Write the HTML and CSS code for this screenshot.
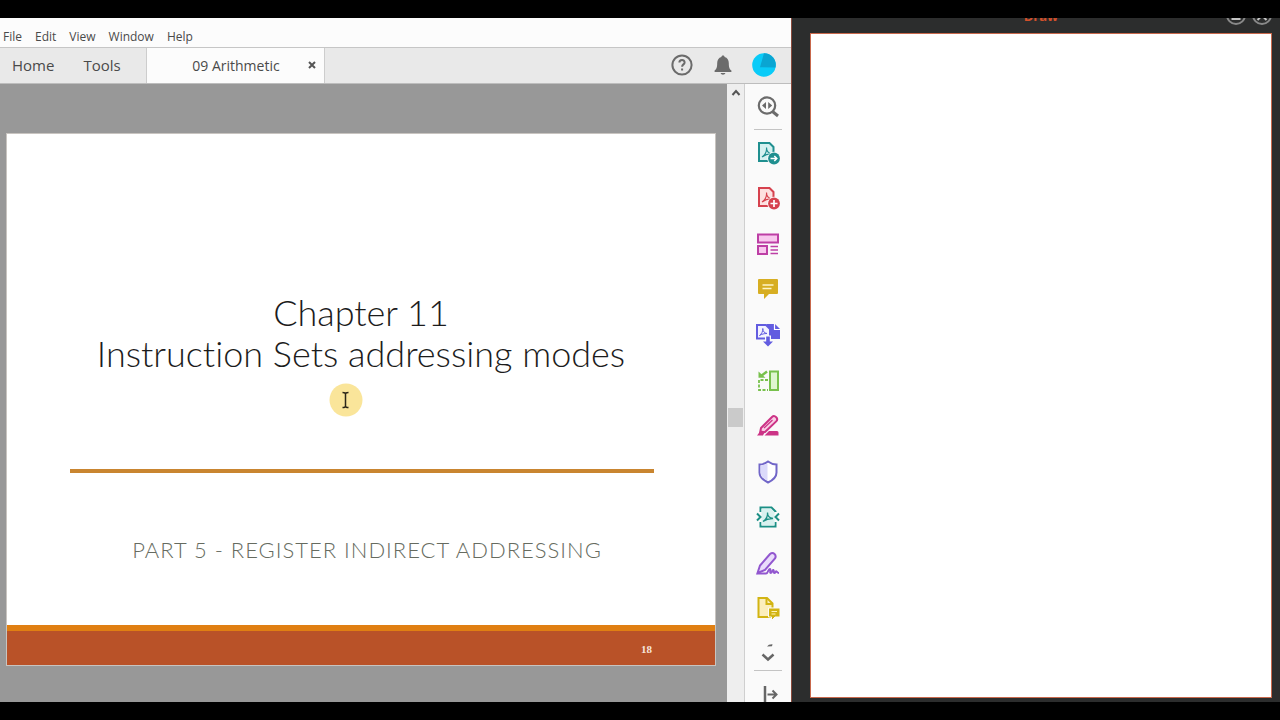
FILE: index.html
```html
<!DOCTYPE html>
<html lang="en">
<head>
    <meta charset="UTF-8">
    <meta name="viewport" content="width=device-width, initial-scale=1.0">
    <title>09 Arithmetic</title>
    <link rel="stylesheet" href="styles.css">
</head>
<body>
    <main class="reader">
        <nav class="menubar">
            <button type="button">File</button>
            <button type="button">Edit</button>
            <button type="button">View</button>
            <button type="button">Window</button>
            <button type="button">Help</button>
        </nav>

        <header class="tabbar">
            <button type="button" class="tab">Home</button>
            <button type="button" class="tab">Tools</button>
            <div class="tab-open">
                <button type="button" class="tab-name">09 Arithmetic</button>
                <button type="button" class="tab-close" aria-label="Close tab">
                    <svg width="8" height="8" viewBox="0 0 8 8" fill="none" stroke="#555" stroke-width="2"><path d="M1 1l6 6M7 1L1 7"/></svg>
                </button>
            </div>
            <div class="account">
                <button type="button" aria-label="Help">
                    <svg width="24" height="24" viewBox="0 0 24 24" fill="none" stroke="#6b6b6b" stroke-width="2"><circle cx="12" cy="12" r="9.6"/><path d="M9.4 9.6c0-3.4 5.3-3.3 5.2-.2 0 2-2.5 2-2.5 4.4M12.1 15.4v2"/></svg>
                </button>
                <button type="button" aria-label="Notifications">
                    <svg width="24" height="24" viewBox="0 0 24 24" fill="#6b6b6b"><path d="M12 2.6c1 0 1.6.6 1.6 1.5 2.8.8 4.2 3 4.2 6 0 4.6.8 6.2 2.6 7.5V19H3.600v-1.400c1.800-1.300 2.600-2.900 2.600-7.500 0-3 1.400-5.200 4.200-6 0-.9.6-1.500 1.600-1.500zM9.600 20h4.800c-.4 1.200-1.200 1.700-2.400 1.700S10 21.200 9.600 20z"/></svg>
                </button>
                <button type="button" aria-label="Profile">
                    <svg width="24" height="24" viewBox="0 0 24 24"><circle cx="12" cy="12" r="11.800" fill="#09cbf8"/><path d="M12 .2A11.800 11.800 0 0 1 23.500 14.500L8 14.200z" fill="#0aa5d2"/></svg>
                </button>
            </div>
        </header>

        <div class="workspace">
            <section class="document">
                <article class="slide">
                    <h1>Chapter 11<br>Instruction Sets addressing modes</h1>
                    <hr>
                    <p class="subtitle">PART 5 - REGISTER INDIRECT ADDRESSING</p>
                    <footer>18</footer>
                    <svg class="pointer" width="34" height="34" viewBox="0 0 34 34" fill="none"><circle cx="17" cy="17" r="16.500" fill="#fae59a"/><path d="M13.500 9.500c1.800 0 3 .3 3 1.600 0-1.300 1.200-1.600 3-1.600M16.500 11v12M13.500 24.500c1.800 0 3-.3 3-1.600 0 1.300 1.200 1.600 3 1.600" stroke="#2b2618" stroke-width="1.500"/></svg>
                </article>
            </section>

            <div class="scrollbar">
                <button type="button" aria-label="Scroll up">
                    <svg width="10" height="8" viewBox="0 0 10 8" fill="none" stroke="#555" stroke-width="2"><path d="M1.500 6L5 2l3.500 4"/></svg>
                </button>
                <div class="thumb"></div>
            </div>

            <aside class="tools">
                <button type="button" class="search" aria-label="Search tools">
                    <svg width="26" height="26" viewBox="0 0 26 26" fill="none" stroke="#6b6b6b" stroke-width="2.200"><circle cx="12" cy="11.500" r="8.200"/><path d="M17.500 17.500l5.500 4.500" stroke-width="3"/><path d="M11 8v7l-4-3.500zM13.200 8v7l4-3.500z" fill="#6b6b6b" stroke="none"/></svg>
                </button>
                <div class="tool-list">
                    <button type="button" aria-label="Export PDF">
                        <svg width="26" height="26" viewBox="0 0 26 26" fill="none" stroke="#1f8f8f" stroke-width="2"><path d="M4 3h10.500l4 4v14H4z" fill="#d5f1f0"/><path d="M7 17c3-2 5-5 4.500-9.500 0 3.500 2 6 5.500 6.500-4-.3-7 .8-10 3z" stroke-width="1.200"/><circle cx="19" cy="18.500" r="6.800" fill="#fafafa" stroke="none"/><circle cx="19" cy="18.500" r="5.900" fill="#1f8f8f" stroke="none"/><path d="M15.500 18.500h6M19.300 16l2.500 2.500-2.500 2.500" stroke="#fff" stroke-width="1.500"/></svg>
                    </button>
                    <button type="button" aria-label="Create PDF">
                        <svg width="26" height="26" viewBox="0 0 26 26" fill="none" stroke="#d6424e" stroke-width="2"><path d="M4 3h10.500l4 4v14H4z" fill="#fde0e0"/><path d="M7 17c3-2 5-5 4.500-9.500 0 3.500 2 6 5.500 6.500-4-.3-7 .8-10 3z" stroke-width="1.200"/><circle cx="19" cy="18.500" r="6.800" fill="#fafafa" stroke="none"/><circle cx="19" cy="18.500" r="5.900" fill="#d6424e" stroke="none"/><path d="M15.500 18.500h7M19 15v7" stroke="#fff" stroke-width="1.700"/></svg>
                    </button>
                    <button type="button" aria-label="Organize pages">
                        <svg width="26" height="26" viewBox="0 0 26 26" fill="#f8c8ee" stroke="#bd3fa5" stroke-width="2"><path d="M3 3.500h20v8H3zM3 15h9v8H3z"/><path d="M15.500 15.500h7.500M15.500 19h7.500M15.500 22.500h7.500" stroke-width="1.300"/></svg>
                    </button>
                    <button type="button" aria-label="Comment">
                        <svg width="26" height="26" viewBox="0 0 26 26" fill="none"><path d="M4 3h18q1 0 1 1v13q0 1-1 1h-8l-5 5v-5H4q-1 0-1-1V4q0-1 1-1z" fill="#d7ae22"/><path d="M7.500 9h11M7.500 12.500h9" stroke="#fff5c8" stroke-width="1.600"/></svg>
                    </button>
                    <button type="button" aria-label="Combine files">
                        <svg width="26" height="26" viewBox="0 0 26 26" fill="none" stroke="#625ce0"><path d="M12 2h8l5 5v10H12z" fill="#625ce0" stroke="none"/><path d="M19.500 2v5.500H25" stroke="#fff" stroke-width="1.200"/><path d="M2 3h9l4 4v9.500H2z" fill="#f3f2ff" stroke-width="2"/><path d="M4.500 13.500c2-1.500 3.500-4 3.300-7 0 2.800 1.500 4.500 4.200 5-3 0-5 .6-7.500 2z"/><path d="M10 13.500h6V19h3.500L13 25l-6.500-6H10z" fill="#fafafa" stroke="none"/><path d="M11.200 14.500h3.600v5H18l-5 5-5-5h3.200z" fill="#625ce0" stroke="none"/></svg>
                    </button>
                    <button type="button" aria-label="Crop pages">
                        <svg width="26" height="26" viewBox="0 0 26 26" fill="none" stroke="#78c14c" stroke-width="2"><path d="M15 3.500h8v18.500h-8z" fill="#dff6cf"/><path d="M13 12H4v10h9" stroke-width="1.800" stroke-dasharray="3 1.500"/><path d="M12 3.500L6 8" stroke-width="2.500"/><path d="M3.500 3.500v6.300h7z" fill="#78c14c" stroke="none"/></svg>
                    </button>
                    <button type="button" aria-label="Redact">
                        <svg width="26" height="26" viewBox="0 0 26 26" fill="none" stroke="#cc3386" stroke-width="2"><path d="M6 15L17 4q2-2 4.200.2 2 2 0 4.200L10 19l-5 1z" fill="#f9cde5"/><path d="M9 15l8.500-8" stroke-width="1.200"/><path d="M2 22.500l4-5 4 1-2 4zM14 18h8q1.500 0 1.500 1.500v3H9.500z" fill="#cc3386" stroke="none"/></svg>
                    </button>
                    <button type="button" aria-label="Protect">
                        <svg width="26" height="26" viewBox="0 0 26 26" fill="none" stroke="#7166c8" stroke-width="2"><path d="M13 2.500q4 3 8.500 3v8q0 6-8.500 10-8.500-4-8.500-10v-8q4.500 0 8.500-3z" fill="#fff"/><path d="M12.500 4.500v17q-7-3.500-7-8v-7q4-.3 7-2z" fill="#dbdafa" stroke="none"/></svg>
                    </button>
                    <button type="button" aria-label="Optimize PDF">
                        <svg width="26" height="26" viewBox="0 0 26 26" fill="none" stroke="#1b8f85" stroke-width="2"><path d="M5.500 8V3.500h11l4 4V8M5.500 18v4.500h15V18"/><path d="M6.500 4.500h9.500l3.500 4v13h-13z" fill="#d8f1ef" stroke="none"/><path d="M8 17.500c3-2 5-4.500 4.500-9 0 3.500 2 5.500 5.500 6-4-.2-7 .8-10 3z" stroke-width="1.300"/><path d="M2 9.500L5.500 13 2 16.500M24 9.500L20.500 13l3.500 3.500"/></svg>
                    </button>
                    <button type="button" aria-label="Fill and sign">
                        <svg width="26" height="26" viewBox="0 0 26 26" fill="none" stroke="#9257cf" stroke-width="2"><path d="M2.500 23l2.500-7.500L15 4q2.500-2 4.500 0t.5 4.500L10 20z" fill="#eadcfb"/><path d="M2 23.500h9c2.500 0 2-5 4-4.500 1.500.5-1 4 .8 4s1.200-3.500 2.700-3c1 .5-.5 3 1 3s1-2 2-1.700.5 1.700 2.500 1.700" stroke-width="1.900"/></svg>
                    </button>
                    <button type="button" aria-label="Send for comments">
                        <svg width="26" height="26" viewBox="0 0 26 26" fill="none" stroke="#d2b413" stroke-width="2"><path d="M3.500 3h8.500l5.500 5.500V22h-14z" fill="#fbeebc"/><path d="M11.500 3v6h6"/><path d="M13.500 13h11.500v9H20l-3.500 3.500V22h-3z" fill="#d2b413" stroke="#fafafa" stroke-width="1"/><path d="M16.500 16.500h5.500M16.500 19h4" stroke="#fff4b8" stroke-width="1.200"/></svg>
                    </button>
                </div>
                <button type="button" class="more" aria-label="More tools">
                    <svg width="26" height="26" viewBox="0 0 26 26" fill="none" stroke="#666" stroke-width="2.500"><path d="M12 6.500q1.500-2.500 5.500-2.300l-.5 2z" fill="#666" stroke="none"/><path d="M7.500 14.500l5.500 5 5.500-5"/></svg>
                </button>
                <button type="button" class="collapse" aria-label="Collapse pane">
                    <svg width="26" height="26" viewBox="0 0 26 26" fill="none" stroke="#666" stroke-width="2"><path d="M10 5v17" stroke-width="2.500"/><path d="M12.500 13.500H21M17.500 9.500l4 4-4 4"/></svg>
                </button>
            </aside>
        </div>
    </main>

    <section class="draw">
        <header class="draw-header">
            <h2>Draw</h2>
            <div class="window-buttons">
                <button type="button" aria-label="Minimize">
                    <svg width="20" height="20" viewBox="0 0 20 20" fill="none" stroke="#898989" stroke-width="2"><circle cx="10" cy="10" r="9"/><path d="M5.500 14h9" stroke="#c4c4c4"/></svg>
                </button>
                <button type="button" aria-label="Close">
                    <svg width="20" height="20" viewBox="0 0 20 20" fill="none" stroke="#898989" stroke-width="2"><circle cx="10" cy="10" r="9"/><path d="M5.500 6l9 9M14.500 6l-9 9" stroke="#c4c4c4"/></svg>
                </button>
            </div>
        </header>
        <div class="canvas"></div>
    </section>
</body>
</html>
```
FILE: styles.css
```css
* {
    box-sizing: border-box;
}
body {
    display: grid;
    grid-template-columns: 791fr 489fr;
    height: 100vh;
    margin: 0;
    padding: 18px 0;
    background: #000;
    color: #4a4a4a;
    font-family: "Open Sans", "Noto Sans", sans-serif;
    font-size: 12px;
}
button {
    display: flex;
    align-items: center;
    justify-content: center;
    padding: 0;
    border: none;
    background: none;
    color: inherit;
    font: inherit;
    cursor: pointer;
}
svg {
    display: block;
}

/* reader window */
.reader {
    display: flex;
    flex-direction: column;
    min-width: 0;
    min-height: 0;
    background: #fafafa;
}
.menubar {
    display: flex;
    flex: none;
    gap: 13px;
    height: 30px;
    padding: 7px 3px 0;
    border-bottom: 1px solid #c6c6c6;
    background: #fcfcfc;
}
.tabbar {
    display: flex;
    flex: none;
    height: 36px;
    border-bottom: 1px solid #bdbdbd;
    background: #e9e9e9;
}
.tabbar button {
    padding-bottom: 2px;
}
.tab {
    margin-left: 12px;
    margin-right: 17px;
    font-size: 15px;
}
.tab-open {
    display: flex;
    align-items: center;
    justify-content: flex-end;
    gap: 28px;
    width: 179px;
    margin-left: 8px;
    padding-right: 8px;
    border: solid #cdcdcd;
    border-width: 0 1px;
    background: #fcfcfc;
}
.tabbar .tab-name {
    padding: 0;
    font-size: 14px;
}
.account {
    display: flex;
    gap: 17px;
    margin-left: auto;
    padding-right: 15px;
}
.workspace {
    display: flex;
    flex: 1;
    min-height: 0;
}

/* slide */
.document {
    flex: 1;
    min-width: 0;
    padding: 49px 11px 0 6px;
    overflow: hidden;
    background: #989898;
}
.slide {
    position: relative;
    display: flex;
    flex-direction: column;
    aspect-ratio: 4 / 3;
    border: 1px solid #c8c4c0;
    background: #fff;
    text-align: center;
}
.slide h1 {
    margin: 158px 0 0;
    color: #1c1c1c;
    font-family: Lato, "Open Sans", sans-serif;
    font-size: 36px;
    font-variant-ligatures: none;
    font-weight: 300;
    line-height: 41px;
}
.slide hr {
    height: 4px;
    margin: 95px 61px 0 63px;
    border: none;
    background: #c98530;
}
.subtitle {
    margin: 62px 0 0;
    padding-left: 12px;
    color: #666b60;
    font-family: Lato, "Open Sans", sans-serif;
    font-size: 22px;
    font-weight: 300;
    letter-spacing: 1px;
    line-height: 30px;
}
.slide footer {
    height: 40px;
    margin-top: auto;
    padding-right: 63px;
    border-top: 6px solid #e07f12;
    background: #b95228;
    color: #f7e6dd;
    font-family: "Liberation Serif", serif;
    font-size: 11px;
    font-weight: bold;
    line-height: 36px;
    text-align: right;
}
.pointer {
    position: absolute;
    top: 249px;
    left: 322px;
}
.scrollbar {
    display: flex;
    flex-direction: column;
    align-items: center;
    width: 18px;
    border-right: 1px solid #cfcfcf;
    background: #eee;
}
.scrollbar button {
    height: 18px;
}
.thumb {
    width: 15px;
    height: 19px;
    margin-top: 306px;
    background: #cacaca;
}

/* tool pane */
.tools {
    display: flex;
    flex-direction: column;
    align-items: center;
    width: 46px;
    overflow: hidden;
}
.tools button {
    flex: none;
    width: 28px;
}
.tools .search {
    height: 46px;
    border-bottom: 1px solid #c4c4c4;
}
.tool-list {
    display: flex;
    flex: 1;
    flex-direction: column;
    min-height: 0;
}
.tool-list button {
    flex: 1;
}
.tools .more {
    height: 40px;
    padding-top: 4px;
    border-bottom: 1px solid #c4c4c4;
}
.tools .collapse {
    align-items: flex-end;
    height: 31px;
}
.tools .collapse svg {
    margin-bottom: -5px;
}

/* drawing window */
.draw {
    display: flex;
    flex-direction: column;
    min-width: 0;
    padding: 0 8px 4px 18px;
    border-left: 1px solid #8a4a3c;
    background: #2c2d2d;
}
/* title bar sits partly above the window's top edge */
.draw-header {
    display: grid;
    grid-template-columns: 1fr auto 1fr;
    grid-template-rows: 7px;
    align-items: end;
    height: 15px;
    overflow: hidden;
}
.draw-header h2 {
    grid-column: 2;
    margin: 0;
    color: #d4502a;
    font-size: 13px;
    line-height: 18px;
}
.window-buttons {
    display: flex;
    justify-content: flex-end;
    gap: 6px;
}
.canvas {
    flex: 1;
    border: 1px solid #c8684c;
    background: #fff;
}
```
